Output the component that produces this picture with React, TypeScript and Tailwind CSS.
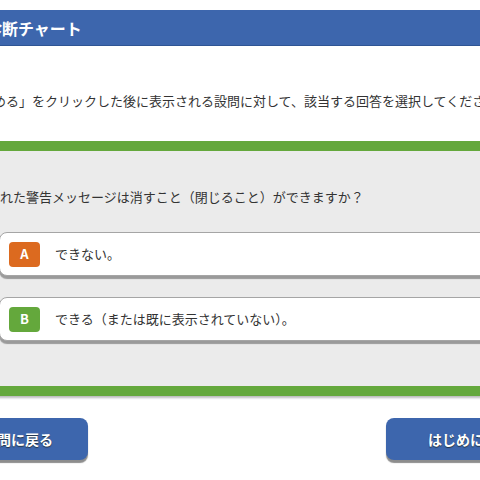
const font = "font-['Meiryo','Noto_Sans_CJK_JP',sans-serif]";

const Choice = ({ letter, color, text }: { letter: string; color: string; text: string }) => (
  <div className="flex h-[44px] items-center rounded-[8px] border border-[#a5a5a5] bg-white pl-[9px] shadow-[0_3px_1px_#9a9a9a]">
    <div
      className={`flex h-[25px] w-[31px] items-center justify-center rounded-[4px] text-[13px] font-bold text-white ${color}`}
    >
      {letter}
    </div>
    <span className="ml-[15px] text-[13px] text-[#333]">{text}</span>
  </div>
);

export default function App() {
  return (
    <div className={`h-[480px] w-[480px] overflow-hidden bg-white ${font}`}>
      <div className="ml-[-80px] w-[640px] pt-[10px]">
        <div className="flex h-[36px] items-center border-b border-[#2f5594] bg-[#3d66ad] pl-[66px] text-[16px] font-bold text-white">
          診断チャート
        </div>

        <div className="flex h-[95px] items-center pt-[14px] pl-[34px] text-[13px] whitespace-nowrap text-[#333]">
          「はじめる」をクリックした後に表示される設問に対して、該当する回答を選択してください。
        </div>

        <div className="border-y-[10px] border-[#64a83c] bg-[#ebebeb] shadow-[0_2px_2px_#bbb]">
          <div className="pt-[36px] pb-[45px]">
            <p className="pl-[41px] text-[13px] leading-[20px] whitespace-nowrap text-[#333]">
              表示された警告メッセージは消すこと（閉じること）ができますか？
            </p>
            <div className="mt-[25px] flex flex-col gap-[21px] pl-[79px]">
              <Choice letter="A" color="bg-[#dc6a1f]" text="できない。" />
              <Choice letter="B" color="bg-[#64a83c]" text="できる（または既に表示されていない）。" />
            </div>
          </div>
        </div>

        <div className="mt-[22px] flex gap-[298px]">
          <button className="h-[42px] w-[168px] rounded-[8px] bg-[#3d66ad] text-[14px] font-bold text-white shadow-[0_3px_1px_#8d8d8d] [text-shadow:0_1px_1px_#234]">
            前の設問に戻る
          </button>
          <button className="h-[42px] w-[168px] rounded-[8px] bg-[#3d66ad] text-[14px] font-bold text-white shadow-[0_3px_1px_#8d8d8d] [text-shadow:0_1px_1px_#234]">
            はじめに戻る
          </button>
        </div>
      </div>
    </div>
  );
}
